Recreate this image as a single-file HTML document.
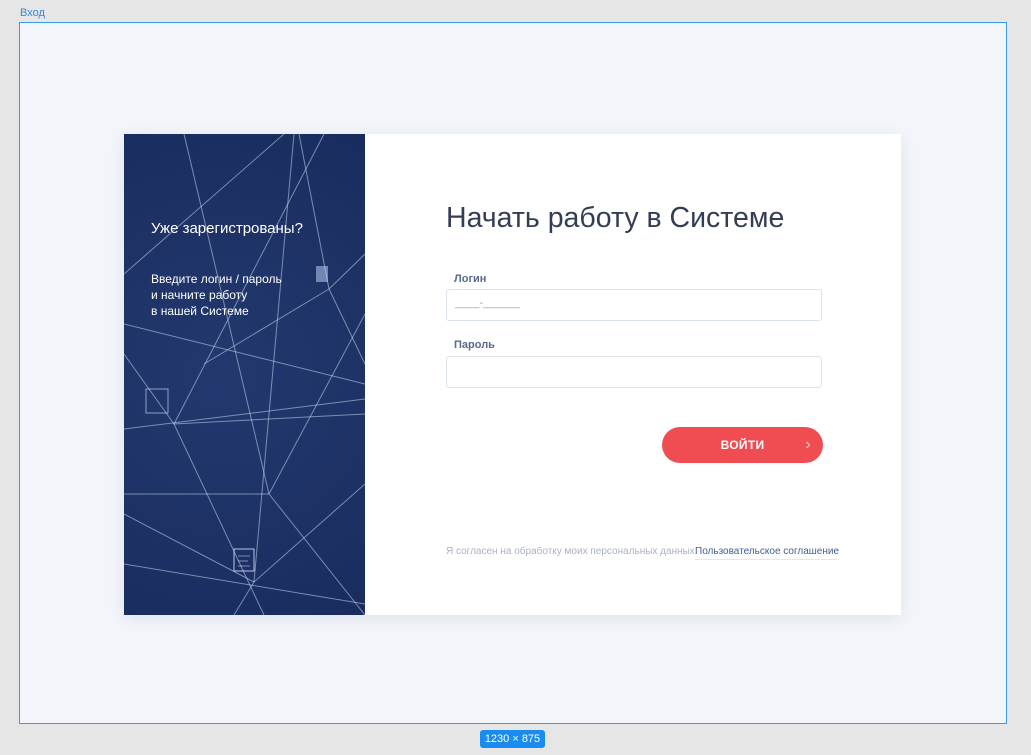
<!DOCTYPE html>
<html><head><meta charset="utf-8"><style>
*{margin:0;padding:0;box-sizing:border-box}
body{width:1031px;height:755px;background:#e6e6e6;position:relative;overflow:hidden;font-family:"Liberation Sans",sans-serif}
.t{position:absolute;left:20px;top:7px;font-size:11px;color:#2f8ae0}
.frame{position:absolute;left:19px;top:22px;width:988px;height:702px;border:1px solid #3a9be8;background:#f2f5f9}
.badge{position:absolute;left:480px;top:730px;width:65px;height:18px;background:#1a8cf0;color:#fff;font-size:11px;border-radius:3px;text-align:center;line-height:18px}
.card{position:absolute;left:124px;top:134px;width:777px;height:481px;background:#fff;box-shadow:0 4px 16px rgba(0,30,80,.08)}
.left{position:absolute;left:0;top:0;width:241px;height:481px;background:radial-gradient(circle at 40% 50%,#22396f,#1a2c5e);overflow:hidden}
.lt{position:absolute;color:#fff}
h1{position:absolute;left:322px;top:68px;font-weight:normal;font-size:28.5px;color:#333d55}
.lbl{position:absolute;left:330px;font-size:11px;color:#5a6b8a;font-weight:bold}
.inp{position:absolute;left:322px;width:376px;height:32px;border:1px solid #dde3ec;border-radius:3px}
.btn{position:absolute;left:538px;top:293px;width:161px;height:36px;border-radius:18px;background:#ef4d52;color:#fff;font-weight:bold;font-size:12px;text-align:center;line-height:36px;letter-spacing:.3px}
</style></head><body>
<div class="t">Вход</div>
<div class="frame"></div>
<div class="badge">1230 × 875</div>
<div class="card">
<div class="left">
<svg width="241" height="481" style="position:absolute;left:0;top:0" stroke="rgba(220,232,255,.5)" stroke-width="1" fill="none">
<line x1="0" y1="190" x2="241" y2="250"/><line x1="0" y1="295" x2="241" y2="265"/>
<line x1="50" y1="290" x2="200" y2="0"/><line x1="50" y1="290" x2="0" y2="220"/>
<line x1="50" y1="290" x2="140" y2="481"/><line x1="130" y1="448" x2="170" y2="0"/>
<line x1="130" y1="448" x2="0" y2="380"/><line x1="130" y1="448" x2="241" y2="350"/>
<line x1="130" y1="448" x2="110" y2="481"/><line x1="145" y1="360" x2="241" y2="180"/>
<line x1="145" y1="360" x2="0" y2="360"/><line x1="145" y1="360" x2="60" y2="0"/>
<line x1="205" y1="155" x2="241" y2="120"/><line x1="205" y1="155" x2="80" y2="230"/>
<line x1="205" y1="155" x2="175" y2="0"/><line x1="205" y1="155" x2="241" y2="230"/>
<line x1="0" y1="140" x2="160" y2="0"/><line x1="50" y1="290" x2="241" y2="280"/>
<line x1="0" y1="430" x2="241" y2="470"/><line x1="145" y1="360" x2="241" y2="481"/>
<rect x="192" y="132" width="12" height="16" fill="rgba(200,215,255,.5)" stroke="none"/>
<rect x="22" y="255" width="22" height="24" stroke="rgba(220,230,255,.6)"/>
<rect x="110" y="415" width="20" height="22" stroke="rgba(230,235,255,.8)"/>
<line x1="114" y1="422" x2="126" y2="422"/><line x1="114" y1="427" x2="124" y2="427"/><line x1="114" y1="432" x2="126" y2="432"/>
</svg>
<div class="lt" style="left:27px;top:86px;font-size:15px">Уже зарегистрованы?</div>
<div class="lt" style="left:27px;top:137px;font-size:12px;line-height:16px">Введите логин / пароль<br>и начните работу<br>в нашей Системе</div>
</div>
<h1>Начать работу в Системе</h1>
<div class="lbl" style="top:139px">Логин</div>
<div class="inp" style="top:155px"><span style="position:absolute;left:8px;top:7px;font-size:11px;color:#9aa5b8">____-______</span></div>
<div class="lbl" style="top:205px">Пароль</div>
<div class="inp" style="top:222px"></div>
<div class="btn">ВОЙТИ<span style="position:absolute;right:12px;top:0;font-weight:normal;font-size:16px;opacity:.7">›</span></div>
<div style="position:absolute;left:322px;top:412px;font-size:10px;color:#a9b2c2">Я согласен на обработку моих персональных данных.</div>
<div style="position:absolute;left:571px;top:412px;font-size:10px;color:#3e5f96;border-bottom:1px solid #e3e7ee;padding-bottom:2px">Пользовательское соглашение</div>
</div>
</body></html>
